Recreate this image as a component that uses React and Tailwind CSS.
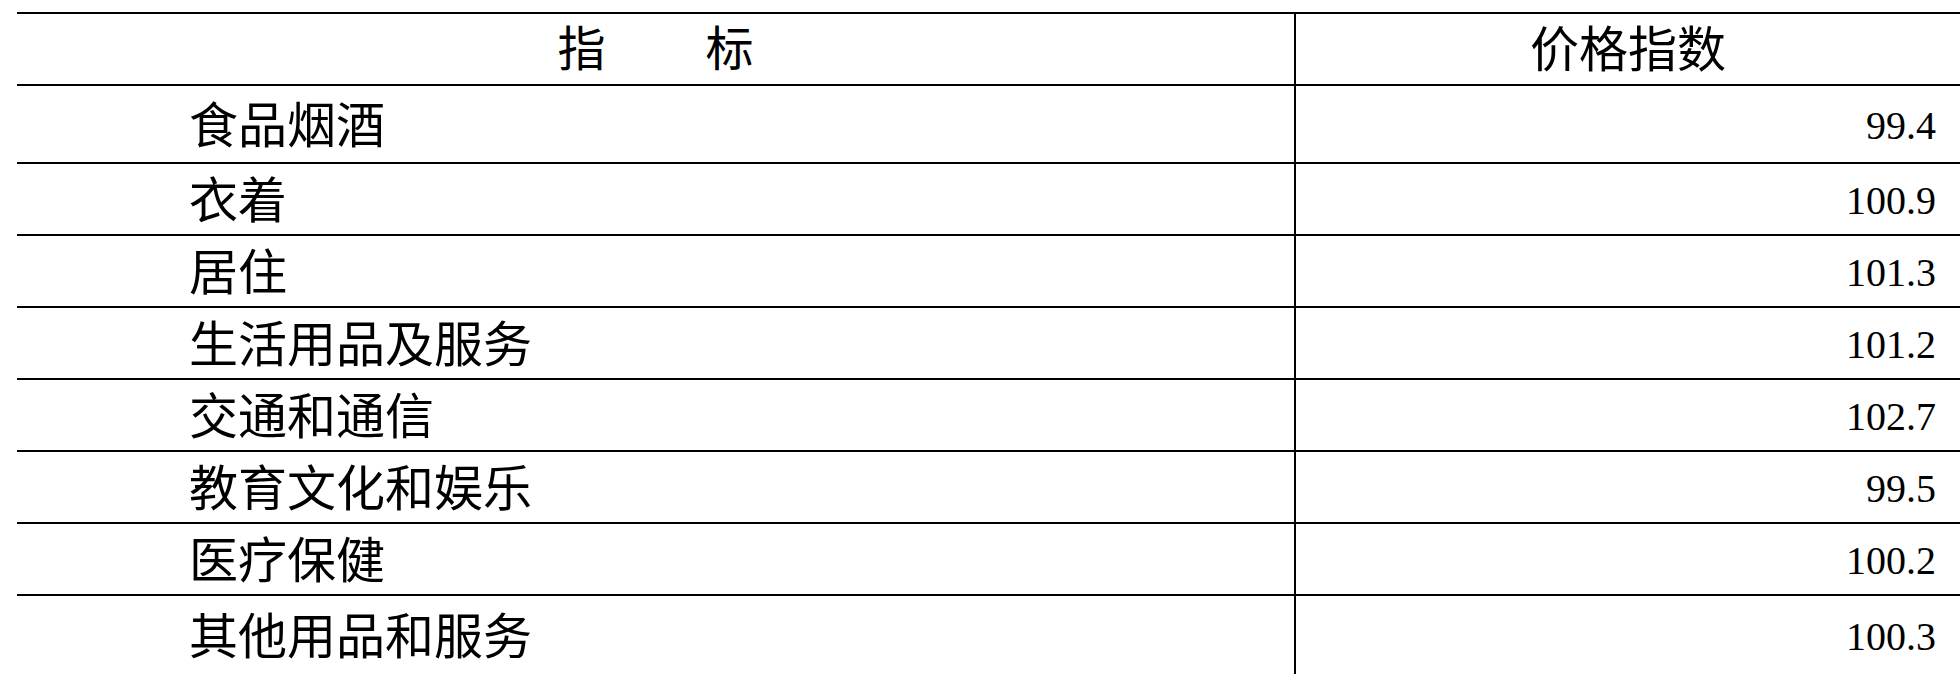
const rows = [
  { name: "食品烟酒", value: "99.4", h: "h-[78px]" },
  { name: "衣着", value: "100.9", h: "h-[72px]" },
  { name: "居住", value: "101.3", h: "h-[72px]" },
  { name: "生活用品及服务", value: "101.2", h: "h-[72px]" },
  { name: "交通和通信", value: "102.7", h: "h-[72px]" },
  { name: "教育文化和娱乐", value: "99.5", h: "h-[72px]" },
  { name: "医疗保健", value: "100.2", h: "h-[72px]" },
  { name: "其他用品和服务", value: "100.3", h: "h-[80px]" },
];

const cjk = "font-['Liberation_Serif','Noto_Sans_CJK_SC',serif]";

export default function App() {
  return (
    <div className="w-[1960px] h-[674px] overflow-hidden bg-white pt-[12px] pl-[17px] text-black">
      <div className="grid grid-cols-[1279px_1fr]">
        {/* header */}
        <div className={`h-[72px] border-t-2 border-r-2 border-black flex items-center justify-center gap-[100px] pt-[2px] text-[48px] leading-none ${cjk}`}>
          <span>指</span>
          <span>标</span>
        </div>
        <div className={`h-[72px] border-t-2 border-black flex items-center justify-center pt-[2px] text-[49px] leading-none ${cjk}`}>
          价格指数
        </div>

        {rows.map((r) => (
          <div key={r.name} className="contents">
            <div className={`${r.h} border-t-2 border-r-2 border-black flex items-center pl-[172px] pt-[4px] text-[49px] leading-none ${cjk}`}>
              {r.name}
            </div>
            <div className={`${r.h} border-t-2 border-black flex items-center justify-end pr-[24px] pt-[3px] text-[40px] leading-none font-['Liberation_Serif',serif]`}>
              {r.value}
            </div>
          </div>
        ))}
      </div>
    </div>
  );
}
